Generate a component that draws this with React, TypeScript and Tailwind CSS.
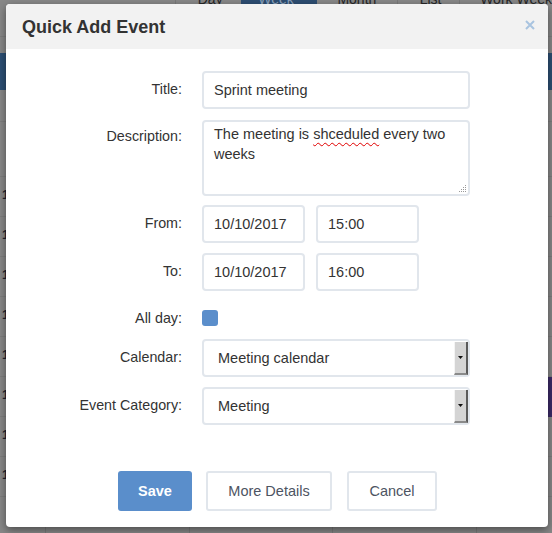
import React from "react";

const font = "font-['Liberation_Sans',Arial,sans-serif]";

function Row({
  label,
  className = "",
  labelClass = "pt-[8px]",
  children,
}: {
  label: string;
  className?: string;
  labelClass?: string;
  children: React.ReactNode;
}) {
  return (
    <div className={`flex ${className}`}>
      <div className={`w-[176px] shrink-0 text-right text-[14.3px] leading-[20px] text-[#333] ${labelClass}`}>
        {label}
      </div>
      <div className="ml-[20px] flex gap-[11px]">{children}</div>
    </div>
  );
}

function TextBox({ value, w }: { value: string; w: string }) {
  return (
    <div
      className={`${w} h-[38px] rounded-[4px] border-2 border-[#e1e6ec] bg-white pl-[10px] pt-[2px] flex items-center text-[14.5px] text-[#333]`}
    >
      {value}
    </div>
  );
}

function Select({ value }: { value: string }) {
  return (
    <div className="relative w-[268px] h-[38px] rounded-[4px] border-2 border-[#e1e6ec] bg-white pl-[14px] pt-[2px] flex items-center text-[14.5px] text-[#333]">
      {value}
      <div className="absolute right-[0px] top-[1px] bottom-[0px] w-[14px] bg-[#d4d4d4] border-l border-l-[#f4f4f4] border-r-2 border-r-[#5a5a5a] border-b-2 border-b-[#8a8a8a] flex items-center justify-center">
        <svg width="5" height="3" viewBox="0 0 5 3">
          <polygon points="0,0 5,0 2.5,3" fill="#111" />
        </svg>
      </div>
    </div>
  );
}

export default function App() {
  const rows = [0, 1, 2, 3, 4, 5, 6, 7];
  return (
    <div className={`relative w-[552px] h-[533px] overflow-hidden bg-[#888888] ${font}`}>
      {/* dimmed calendar background */}
      <div className="flex flex-col">
        <div className="flex h-[20px] -mt-[11px] text-[14px] leading-[20px] text-[#262626]">
          <div className="w-[178px] border-r border-[#7a7a7a]" />
          <div className="w-[66px] pl-[22px]">Day</div>
          <div className="w-[77px] bg-[#2d4e72] text-[#8ea4bd] pl-[17px]">Week</div>
          <div className="w-[81px] border-r border-[#7a7a7a] pl-[20px]">Month</div>
          <div className="w-[63px] border-r border-[#7a7a7a] pl-[22px]">List</div>
          <div className="flex-1 pl-[20px] whitespace-nowrap">Work Week</div>
        </div>
        <div className="h-[28px] border-b border-[#7e7e7e]" />
        <div className="h-[16px]" />
        <div className="h-[37px] bg-[#2c4f74]" />
        <div className="h-[32px] border-b border-[#7e7e7e]" />
        <div className="h-[55px] border-b border-[#7e7e7e]" />
        {rows.map((i) => (
          <div key={i} className="relative h-[40px] border-b border-[#7e7e7e]">
            <span className="absolute left-[2px] top-[8px] text-[13px] font-bold text-[#1e2330]">1</span>
            {i === 5 && (
              <div className="absolute right-0 top-[0px] w-[10px] h-[40px] bg-[#3b2a68]" />
            )}
          </div>
        ))}
        <div className="flex h-[40px]">
          <div className="w-[46px] border-r border-[#7a7a7a]" />
          <div className="w-[144px] border-r border-[#7a7a7a]" />
          <div className="w-[143px] border-r border-[#7a7a7a]" />
          <div className="w-[144px] border-r border-[#7a7a7a]" />
        </div>
      </div>

      {/* modal */}
      <div className="absolute left-[6px] top-[4px] w-[542px] h-[523px] rounded-[4px] bg-white shadow-[0_3px_8px_rgba(0,0,0,0.45)] overflow-hidden flex flex-col">
        <div className="h-[45px] bg-[#f2f2f2] flex items-center justify-between pl-[16px] pr-[13px]">
          <div className="text-[18px] font-bold text-[#333] leading-none">Quick Add Event</div>
          <svg width="10" height="10" viewBox="0 0 10 10" className="-mt-[3px]">
            <path d="M1 1 L9 9 M9 1 L1 9" stroke="#a9c4e0" strokeWidth="2" />
          </svg>
        </div>

        <div className="flex flex-col pt-[22px]">
          <Row label="Title:">
            <TextBox value="Sprint meeting" w="w-[268px]" />
          </Row>
          <Row label="Description:" className="mt-[11px]" labelClass="pt-[6px]">
            <div className="relative w-[268px] h-[76px] rounded-[4px] border-2 border-[#e1e6ec] bg-white pl-[10px] pr-[12px] pt-[2px] text-[14.5px] leading-[20px] text-[#333]">
              The meeting is{" "}
              <span className="underline decoration-wavy decoration-[#e00000] decoration-1 underline-offset-[3px]">
                shceduled
              </span>{" "}
              every two weeks
              <svg width="8" height="8" viewBox="0 0 8 8" className="absolute right-[1px] bottom-[1px]">
                <g fill="#9a9a9a">
                  <rect x="6" y="0" width="1" height="1" />
                  <rect x="4" y="2" width="1" height="1" />
                  <rect x="6" y="2" width="1" height="1" />
                  <rect x="2" y="4" width="1" height="1" />
                  <rect x="4" y="4" width="1" height="1" />
                  <rect x="6" y="4" width="1" height="1" />
                  <rect x="0" y="6" width="1" height="1" />
                  <rect x="2" y="6" width="1" height="1" />
                  <rect x="4" y="6" width="1" height="1" />
                  <rect x="6" y="6" width="1" height="1" />
                </g>
              </svg>
            </div>
          </Row>
          <Row label="From:" className="mt-[9px]">
            <TextBox value="10/10/2017" w="w-[103px]" />
            <TextBox value="15:00" w="w-[103px]" />
          </Row>
          <Row label="To:" className="mt-[10px]">
            <TextBox value="10/10/2017" w="w-[103px]" />
            <TextBox value="16:00" w="w-[103px]" />
          </Row>
          <div className="flex items-center mt-[17px] h-[20px]">
            <div className="w-[176px] shrink-0 text-right text-[14.3px] leading-[20px] text-[#333]">All day:</div>
            <div className="ml-[20px] w-[16px] h-[16px] rounded-[3px] bg-[#5b8ecb]" />
          </div>
          <Row label="Calendar:" className="mt-[11px]">
            <Select value="Meeting calendar" />
          </Row>
          <Row label="Event Category:" className="mt-[10px]">
            <Select value="Meeting" />
          </Row>
        </div>

        <div className="flex mt-[46px] pl-[112px] text-[14.5px]">
          <div className="w-[74px] h-[40px] pt-[2px] rounded-[3px] bg-[#5a8ecb] text-white font-bold flex items-center justify-center">
            Save
          </div>
          <div className="ml-[14px] w-[126px] h-[40px] pt-[2px] rounded-[3px] border-2 border-[#e1e6ec] bg-white text-[#4d5462] flex items-center justify-center">
            More Details
          </div>
          <div className="ml-[15px] w-[90px] h-[40px] pt-[2px] rounded-[3px] border-2 border-[#e1e6ec] bg-white text-[#4d5462] flex items-center justify-center">
            Cancel
          </div>
        </div>
      </div>
    </div>
  );
}
